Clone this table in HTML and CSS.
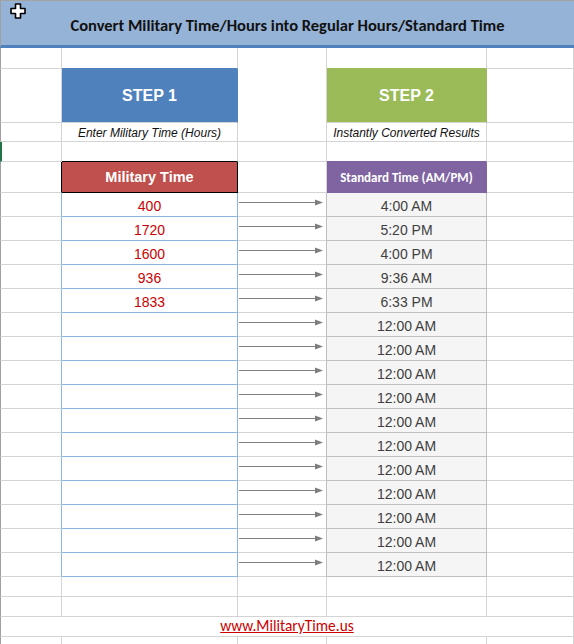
FILE: index.html
```html
<!DOCTYPE html>
<html>
<head>
<meta charset="utf-8">
<link rel="stylesheet" href="styles.css">
</head>
<body>
<div class="sheet">
  <div class="banner">
    <svg class="cursor" width="16" height="16" viewBox="0 0 16 16"><path d="M5.5 1H10.5V5.5H15V10.5H10.5V15H5.5V10.5H1V5.5H5.5Z" fill="#fff" stroke="#000" stroke-width="1.6" stroke-linejoin="round"/></svg>
    <span class="banner-title">Convert Military Time/Hours into Regular Hours/Standard Time</span>
  </div>

  <!-- row 1 -->
  <div class="c a"></div>
  <div class="c b-top"></div>
  <div class="c merged-c"></div>
  <div class="c d-top"></div>
  <div class="c"></div>

  <!-- row 2 -->
  <div class="c a"></div>
  <div class="c step step1">STEP 1</div>
  <div class="c step step2">STEP 2</div>
  <div class="c"></div>

  <!-- row 3 -->
  <div class="c a"></div>
  <div class="c note">Enter Military Time (Hours)</div>
  <div class="c note">Instantly Converted Results</div>
  <div class="c"></div>

  <!-- row 4 -->
  <div class="c a sel"></div>
  <div class="c b-above-head"></div>
  <div class="c"></div>
  <div class="c d-above-head"></div>
  <div class="c"></div>

  <!-- row 5 -->
  <div class="c a a-head"></div>
  <div class="c head-mil">Military Time</div>
  <div class="c c-head"></div>
  <div class="c head-std">Standard Time (AM/PM)</div>
  <div class="c"></div>
</div>
<script src="rows.js"></script>
</body>
</html>
```

FILE: rows.js
```js
(function () {
  var mil = ["400", "1720", "1600", "936", "1833"];
  var std = ["4:00 AM", "5:20 PM", "4:00 PM", "9:36 AM", "6:33 PM"];
  var sheet = document.querySelector('.sheet');
  var arrow = '<svg class="arrow" width="86" height="8" viewBox="0 0 86 8"><line x1="1" y1="3.5" x2="78" y2="3.5" stroke="#7f7f7f" stroke-width="1"/><path d="M77 0.5L85 3.5L77 6.5Z" fill="#7f7f7f"/></svg>';
  var html = '';
  for (var i = 0; i < 16; i++) {
    html += '<div class="c a a-data"></div>';
    html += '<div class="c mil">' + (mil[i] || '') + '</div>';
    html += '<div class="c arr">' + arrow + '</div>';
    html += '<div class="c std">' + (std[i] || '12:00 AM') + '</div>';
    html += '<div class="c"></div>';
  }
  for (var j = 0; j < 2; j++) {
    html += '<div class="c a"></div><div class="c"></div><div class="c"></div><div class="c"></div><div class="c"></div>';
  }
  html += '<div class="c link-row"><a class="link" href="#">www.MilitaryTime.us</a></div>';
  html += '<div class="c a"></div><div class="c"></div><div class="c"></div><div class="c"></div><div class="c"></div>';
  sheet.insertAdjacentHTML('beforeend', html);
})();
```

FILE: styles.css
```css
html, body {
  margin: 0;
  padding: 0;
  background: #fff;
}

.sheet {
  display: grid;
  grid-template-columns: 62px 176px 89px 160px 87px;
  grid-template-rows: 48px 21px 54px 19px 20px 31px repeat(16, 24px) 20px 20px 20px 20px;
  width: 574px;
  height: 644px;
  overflow: hidden;
  font-family: "Liberation Sans", Arial, sans-serif;
}

.c {
  box-sizing: border-box;
  border-right: 1px solid #d4d4d4;
  border-bottom: 1px solid #d4d4d4;
  min-width: 0;
}

.a {
  border-left: 1px solid #9f9f9f;
}

.sel {
  border-left: 2px solid #217346;
}

.banner {
  position: relative;
  grid-column: 1 / -1;
  box-sizing: border-box;
  background: #95b3d7;
  border-top: 1px solid #a3a3a3;
  border-left: 1px solid #9f9f9f;
  border-bottom: 3px solid #4f81bd;
  display: flex;
  align-items: center;
  justify-content: center;
  padding-top: 3px;
}

.cursor {
  position: absolute;
  left: 9px;
  top: 2px;
}

.banner-title {
  font-family: Carlito, Calibri, "Open Sans", sans-serif;
  font-weight: bold;
  font-size: 16.5px;
  color: #111;
}

.merged-c {
  grid-row: span 3;
}

.b-top {
  border-bottom-color: #4f81bd;
}

.d-top {
  border-bottom-color: #9bbb59;
}

.step {
  display: flex;
  align-items: center;
  justify-content: center;
  color: #fff;
  font-weight: bold;
  font-size: 16px;
  padding-top: 1px;
}

.step1 {
  background: #4f81bd;
  border-right-color: #4f81bd;
}

.step2 {
  background: #9bbb59;
  border-right-color: #9bbb59;
}

.note {
  font-style: italic;
  font-size: 12px;
  color: #111;
  text-align: center;
  line-height: 18px;
  padding-top: 1px;
}

.b-above-head {
  border-bottom-color: #000;
}

.d-above-head {
  border-bottom-color: #8064a2;
}

.a-head {
  border-right-color: #000;
}

.head-mil {
  background: #c0504d;
  border-right-color: #000;
  border-bottom-color: #000;
  color: #fff;
  font-weight: bold;
  font-size: 14.5px;
  display: flex;
  align-items: center;
  justify-content: center;
}

.head-std {
  background: #8064a2;
  border-right-color: #8064a2;
  border-bottom-color: #8064a2;
  color: #fff;
  font-family: Carlito, Calibri, "Open Sans", sans-serif;
  font-weight: bold;
  font-size: 13px;
  display: flex;
  align-items: center;
  justify-content: center;
}

.a-data {
  border-right-color: #8db4e2;
}

.mil {
  border-right-color: #8db4e2;
  border-bottom-color: #8db4e2;
  color: #cc0000;
  font-size: 14px;
  line-height: 16px;
  padding-top: 5px;
  text-align: center;
}

.arr {
  border-right-color: #bfbfbf;
  padding-top: 6px;
}

.arrow {
  display: block;
}

.std {
  background: #f5f5f5;
  border-right-color: #bfbfbf;
  border-bottom-color: #bfbfbf;
  color: #3f3f3f;
  font-size: 14px;
  line-height: 16px;
  padding-top: 5px;
  text-align: center;
}

.link-row {
  grid-column: 1 / -1;
  border-left: 1px solid #9f9f9f;
  text-align: center;
  line-height: 18px;
}

.link {
  font-family: Carlito, Calibri, "Open Sans", sans-serif;
  font-size: 15.4px;
  color: #cc0000;
  text-decoration: underline;
}
```
